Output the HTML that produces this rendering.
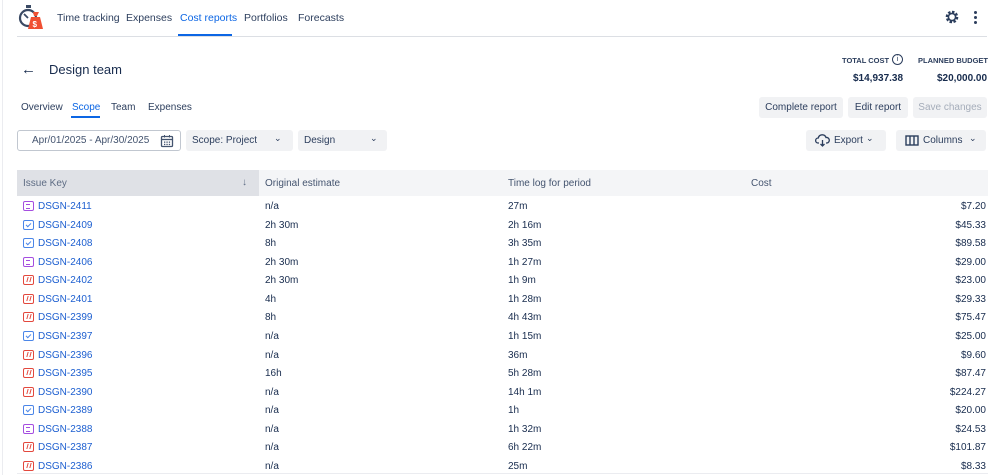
<!DOCTYPE html>
<html><head><meta charset="utf-8"><style>
*{box-sizing:border-box;margin:0;padding:0}
body{width:998px;height:475px;overflow:hidden;background:#fff;font-family:"Liberation Sans",sans-serif;color:#172b4d;font-size:10px;position:relative}
.abs{position:absolute}
.nav{top:12px;font-size:10.5px;color:#2c3e5d;}
.btn{position:absolute;background:#f1f2f4;border-radius:3px;font-size:10px;color:#2c3e5d;display:flex;align-items:center;justify-content:center}
.row{position:absolute;left:17px;width:971px;height:18px;font-size:10px;color:#172b4d}
.row span{position:absolute;top:3px}
.k{left:21px;color:#1d5fd0}
.ic{position:absolute;left:6px;top:3px;width:11px;height:10px;border:1.3px solid;border-radius:2px}
.st{border-color:#a54ee0}.ta{border-color:#4b86e8}.bu{border-color:#e3483d}
.st:after{content:"";position:absolute;left:2px;top:2px;width:4px;height:3px;border-top:1.2px solid #a54ee0;border-bottom:1.2px solid #a54ee0}
.ta:after{content:"";position:absolute;left:3px;top:1px;width:2px;height:4px;border-right:1.2px solid #4b86e8;border-bottom:1.2px solid #4b86e8;transform:rotate(45deg)}
.bu:after{content:"";position:absolute;left:3px;top:1px;width:2px;height:5px;border-left:1.3px solid #e3483d;border-right:1.3px solid #e3483d;transform:skewX(-15deg)}
.chev{position:absolute;font-size:9px}
</style></head><body>
<div class="abs" style="left:2px;top:0;width:1px;height:475px;background:#ebecf0"></div>
<svg class="abs" style="left:17px;top:3px" width="28" height="28" viewBox="0 0 28 28">
<circle cx="11" cy="15" r="8" fill="none" stroke="#3a4a64" stroke-width="2.2"/>
<rect x="9" y="2" width="5" height="3" fill="#3a4a64"/>
<line x1="11" y1="15" x2="7" y2="11" stroke="#3a4a64" stroke-width="1.8"/>
<path d="M14 14 L23 14 L26 26 L11 26 Z" fill="#f05033"/>
<path d="M16 9 L22 9 L20 13 L17 13 Z" fill="#f05033"/>
<text x="15.5" y="24" font-size="8" fill="#fff" font-weight="bold" font-family="Liberation Sans">$</text>
</svg>
<div class="abs nav" style="left:57px">Time tracking</div>
<div class="abs nav" style="left:126px">Expenses</div>
<div class="abs nav" style="left:180px;color:#0c66e4">Cost reports</div>
<div class="abs" style="left:178px;top:34px;width:54px;height:3px;background:#0c66e4"></div>
<div class="abs nav" style="left:244px">Portfolios</div>
<div class="abs nav" style="left:298px">Forecasts</div>
<div class="abs" style="left:17px;top:36px;width:970px;height:1px;background:#dcdfe4"></div>
<svg class="abs" style="left:944px;top:9px" width="16" height="16" viewBox="0 0 16 16"><circle cx="8" cy="8" r="5" fill="none" stroke="#2c3e5d" stroke-width="2.6" stroke-dasharray="2.4 1.5"/><circle cx="8" cy="8" r="3.6" fill="none" stroke="#2c3e5d" stroke-width="1.6"/></svg>
<div class="abs" style="left:974px;top:11px;width:3px;height:3px;border-radius:2px;background:#2c3e5d;box-shadow:0 5px 0 #2c3e5d,0 10px 0 #2c3e5d"></div>

<div class="abs" style="left:21px;top:61px;font-size:15px;color:#172b4d">&#8592;</div>
<div class="abs" style="left:49px;top:62px;font-size:13px;color:#172b4d">Design team</div>
<div class="abs" style="left:842px;top:56px;font-size:7.5px;font-weight:bold;color:#2c3e5d">TOTAL COST</div>
<div class="abs" style="left:892px;top:54px;width:11px;height:11px;border:1px solid #2c3e5d;border-radius:50%;font-size:7px;text-align:center;line-height:10px">i</div>
<div class="abs" style="left:918px;top:56px;font-size:7.5px;font-weight:bold;color:#2c3e5d">PLANNED BUDGET</div>
<div class="abs" style="left:853px;top:73px;font-size:10px;font-weight:bold">$14,937.38</div>
<div class="abs" style="left:937px;top:73px;font-size:10px;font-weight:bold">$20,000.00</div>

<div class="abs" style="left:21px;top:102px;font-size:10px;color:#2c3e5d">Overview</div>
<div class="abs" style="left:72px;top:102px;font-size:10px;color:#0c66e4">Scope</div>
<div class="abs" style="left:71px;top:116px;width:29px;height:2px;background:#0c66e4"></div>
<div class="abs" style="left:111px;top:102px;font-size:10px;color:#2c3e5d">Team</div>
<div class="abs" style="left:148px;top:102px;font-size:10px;color:#2c3e5d">Expenses</div>
<div class="btn" style="left:759px;top:97px;width:84px;height:21px">Complete report</div>
<div class="btn" style="left:848px;top:97px;width:60px;height:21px">Edit report</div>
<div class="btn" style="left:913px;top:97px;width:74px;height:21px;color:#a5adba">Save changes</div>

<div class="abs" style="left:17px;top:130px;width:164px;height:21px;border:1px solid #c1c7d0;border-radius:3px"></div>
<div class="abs" style="left:32px;top:135px;font-size:10px;color:#44546f">Apr/01/2025 - Apr/30/2025</div>
<svg class="abs" style="left:160px;top:134px" width="14" height="14" viewBox="0 0 14 14"><rect x="1.5" y="2.5" width="11" height="10" rx="1" fill="none" stroke="#44546f" stroke-width="1.3"/><line x1="1.5" y1="5.5" x2="12.5" y2="5.5" stroke="#44546f" stroke-width="1.3"/><line x1="4.5" y1="1" x2="4.5" y2="3.5" stroke="#44546f"/><line x1="9.5" y1="1" x2="9.5" y2="3.5" stroke="#44546f"/><g fill="#44546f"><rect x="4" y="7.5" width="1.3" height="1.3"/><rect x="6.4" y="7.5" width="1.3" height="1.3"/><rect x="8.8" y="7.5" width="1.3" height="1.3"/><rect x="4" y="9.8" width="1.3" height="1.3"/><rect x="6.4" y="9.8" width="1.3" height="1.3"/><rect x="8.8" y="9.8" width="1.3" height="1.3"/></g></svg>
<div class="btn" style="left:186px;top:130px;width:107px;height:21px;justify-content:flex-start;padding-left:6px">Scope: Project<span class="chev" style="left:88px;top:3px">&#8964;</span></div>
<div class="btn" style="left:298px;top:130px;width:89px;height:21px;justify-content:flex-start;padding-left:6px">Design<span class="chev" style="left:72px;top:3px">&#8964;</span></div>
<div class="btn" style="left:806px;top:130px;width:80px;height:21px;justify-content:flex-start;padding-left:9px">
<svg width="15" height="13" viewBox="0 0 15 13" style="margin-right:4px"><path d="M4 9 H3 A2.5 2.5 0 0 1 3.3 4 A4 4 0 0 1 11 3.5 A2.7 2.7 0 0 1 12 9 H11" fill="none" stroke="#2c3e5d" stroke-width="1.3"/><path d="M7.5 6 V12 M5.5 10 L7.5 12 L9.5 10" fill="none" stroke="#2c3e5d" stroke-width="1.3"/></svg>Export<span class="chev" style="left:60px;top:3px">&#8964;</span></div>
<div class="btn" style="left:896px;top:130px;width:90px;height:21px;justify-content:flex-start;padding-left:9px">
<svg width="14" height="11" viewBox="0 0 14 11" style="margin-right:4px"><rect x="1" y="1" width="12" height="9" fill="none" stroke="#2c3e5d" stroke-width="1.4"/><line x1="5" y1="1" x2="5" y2="10" stroke="#2c3e5d" stroke-width="1.4"/><line x1="9" y1="1" x2="9" y2="10" stroke="#2c3e5d" stroke-width="1.4"/></svg>Columns<span class="chev" style="left:73px;top:3px">&#8964;</span></div>

<div class="abs" style="left:17px;top:170px;width:971px;height:26px;background:#f4f5f7"></div>
<div class="abs" style="left:17px;top:170px;width:242px;height:26px;background:#dfe1e6"></div>
<div class="abs" style="left:23px;top:178px;color:#5e6c84">Issue Key</div>
<div class="abs" style="left:242px;top:177px;color:#5e6c84">&#8595;</div>
<div class="abs" style="left:265px;top:178px;color:#44546f">Original estimate</div>
<div class="abs" style="left:508px;top:178px;color:#44546f">Time log for period</div>
<div class="abs" style="left:751px;top:178px;color:#44546f">Cost</div>
<div class="abs" style="left:17px;top:473px;width:971px;height:1px;background:#ebecf0"></div>

<div class="row" style="top:198px"><i class="ic st"></i><span class="k">DSGN-2411</span><span style="left:248px">n/a</span><span style="left:491px">27m</span><span style="right:2px">$7.20</span></div>
<div class="row" style="top:216.6px"><i class="ic ta"></i><span class="k">DSGN-2409</span><span style="left:248px">2h 30m</span><span style="left:491px">2h 16m</span><span style="right:2px">$45.33</span></div>
<div class="row" style="top:235.1px"><i class="ic ta"></i><span class="k">DSGN-2408</span><span style="left:248px">8h</span><span style="left:491px">3h 35m</span><span style="right:2px">$89.58</span></div>
<div class="row" style="top:253.7px"><i class="ic st"></i><span class="k">DSGN-2406</span><span style="left:248px">2h 30m</span><span style="left:491px">1h 27m</span><span style="right:2px">$29.00</span></div>
<div class="row" style="top:272.3px"><i class="ic bu"></i><span class="k">DSGN-2402</span><span style="left:248px">2h 30m</span><span style="left:491px">1h 9m</span><span style="right:2px">$23.00</span></div>
<div class="row" style="top:290.9px"><i class="ic bu"></i><span class="k">DSGN-2401</span><span style="left:248px">4h</span><span style="left:491px">1h 28m</span><span style="right:2px">$29.33</span></div>
<div class="row" style="top:309.4px"><i class="ic bu"></i><span class="k">DSGN-2399</span><span style="left:248px">8h</span><span style="left:491px">4h 43m</span><span style="right:2px">$75.47</span></div>
<div class="row" style="top:328px"><i class="ic ta"></i><span class="k">DSGN-2397</span><span style="left:248px">n/a</span><span style="left:491px">1h 15m</span><span style="right:2px">$25.00</span></div>
<div class="row" style="top:346.6px"><i class="ic bu"></i><span class="k">DSGN-2396</span><span style="left:248px">n/a</span><span style="left:491px">36m</span><span style="right:2px">$9.60</span></div>
<div class="row" style="top:365.1px"><i class="ic bu"></i><span class="k">DSGN-2395</span><span style="left:248px">16h</span><span style="left:491px">5h 28m</span><span style="right:2px">$87.47</span></div>
<div class="row" style="top:383.7px"><i class="ic bu"></i><span class="k">DSGN-2390</span><span style="left:248px">n/a</span><span style="left:491px">14h 1m</span><span style="right:2px">$224.27</span></div>
<div class="row" style="top:402.3px"><i class="ic ta"></i><span class="k">DSGN-2389</span><span style="left:248px">n/a</span><span style="left:491px">1h</span><span style="right:2px">$20.00</span></div>
<div class="row" style="top:420.9px"><i class="ic st"></i><span class="k">DSGN-2388</span><span style="left:248px">n/a</span><span style="left:491px">1h 32m</span><span style="right:2px">$24.53</span></div>
<div class="row" style="top:439.4px"><i class="ic bu"></i><span class="k">DSGN-2387</span><span style="left:248px">n/a</span><span style="left:491px">6h 22m</span><span style="right:2px">$101.87</span></div>
<div class="row" style="top:458px"><i class="ic bu"></i><span class="k">DSGN-2386</span><span style="left:248px">n/a</span><span style="left:491px">25m</span><span style="right:2px">$8.33</span></div>
</body></html>
